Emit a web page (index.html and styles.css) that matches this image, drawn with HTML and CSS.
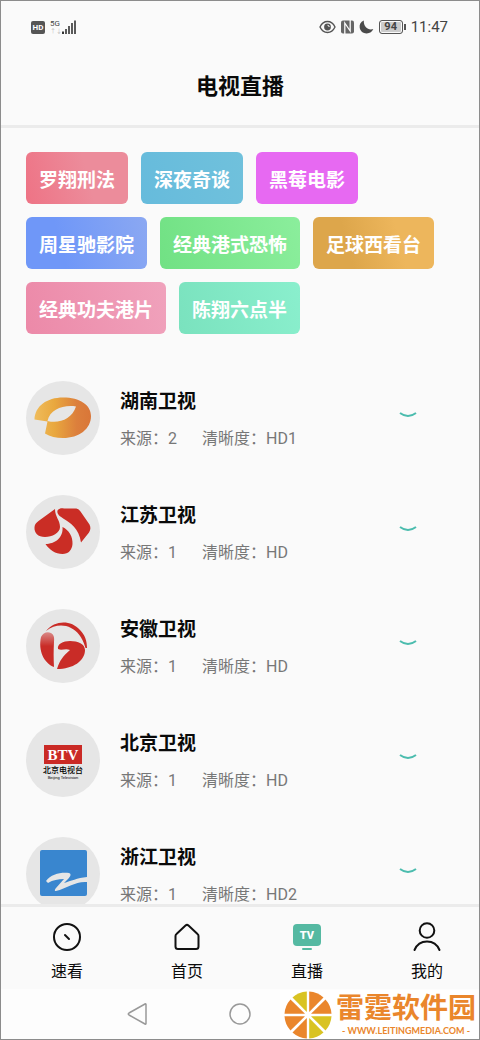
FILE: index.html
```html
<!DOCTYPE html>
<html lang="zh-CN">
<head>
    <meta charset="UTF-8">
    <meta name="viewport" content="width=device-width, initial-scale=1.0">
    <title>电视直播</title>
    <link rel="stylesheet" href="styles.css">
</head>
<body>
    <header class="header">
        <div class="status">
            <span class="hd">HD</span>
            <span class="network">5G<small>↑↓</small></span>
            <svg class="signal" width="16" height="14" viewBox="0 0 16 14" fill="#333">
                <path d="M1 11.500h2V14H1zM4.200 9h1.600v5H4.200zM7.200 6h1.600v8H7.200zM10.200 3h1.600v11h-1.600zM13.200 .5h1.600V14h-1.600z"/>
            </svg>
            <span class="spacer"></span>
            <svg width="17" height="14" viewBox="0 0 17 14" fill="none" stroke="#555" stroke-width="1.400">
                <path d="M1 7C4.500 -.3 12.500-.3 16 7 12.500 14.300 4.500 14.300 1 7z"/>
                <circle cx="8.500" cy="7" r="3.400" fill="#555" stroke="none"/>
                <path d="M8.500 5.300a1.700 1.700 0 0 1 1.700 1.700" stroke="#fff" stroke-width="1"/>
            </svg>
            <svg width="13" height="14" viewBox="0 0 13 14">
                <rect width="13" height="13" y=".5" rx="2" fill="#666"/>
                <path d="M3.800 14V3l5.400 8V0" fill="none" stroke="#fafafa" stroke-width="1.300"/>
            </svg>
            <svg width="15" height="14" viewBox="0 0 15 14" fill="#4a4a4a">
                <path d="M4.800.5C1.500 1.800.2 4.600.7 7.800c.6 3.500 3.500 5.800 7 5.700 3.200-.1 5.500-1.900 6.600-4.500-4.800 1.800-9.900-2-9.500-8.500z"/>
            </svg>
            <span class="battery">94</span>
            <time class="clock">11:47</time>
        </div>
        <h1>电视直播</h1>
    </header>

    <main>
        <div class="tags">
            <button class="tag red">罗翔刑法</button>
            <button class="tag blue">深夜奇谈</button>
            <button class="tag purple">黑莓电影</button>
            <button class="tag indigo">周星驰影院</button>
            <button class="tag green">经典港式恐怖</button>
            <button class="tag orange">足球西看台</button>
            <button class="tag pink">经典功夫港片</button>
            <button class="tag mint">陈翔六点半</button>
        </div>

        <ul class="channels">
            <li>
                <svg class="logo" viewBox="0 0 74 74">
                    <defs>
                        <linearGradient id="mango">
                            <stop offset="0" stop-color="#efbc5c"/>
                            <stop offset=".35" stop-color="#e9a83e"/>
                            <stop offset=".75" stop-color="#dc7f3c"/>
                            <stop offset="1" stop-color="#d97638"/>
                        </linearGradient>
                    </defs>
                    <path fill="url(#mango)" fill-rule="evenodd" d="M8.500 38.500C9 25 21 16.500 37 16.500c17 0 28 7.500 28 18.500 0 13-12 22-28 22-7 0-13-1.500-18-4.500L21.500 40.500zM21.500 40C33 43 46 38 50 25.500 38 23.500 24 28 21.500 40z"/>
                </svg>
                <div class="info">
                    <h2>湖南卫视</h2>
                    <p><span>来源：2</span><span>清晰度：HD1</span></p>
                </div>
                <button class="more" aria-label="展开湖南卫视"><svg width="18" height="6" viewBox="0 0 18 6"><path d="M1 1q8 6 16 0"/></svg></button>
            </li>
            <li>
                <svg class="logo" viewBox="0 0 74 74" fill="#ca2d25">
                    <path d="M29 14C29 22 34 25 34 32c0 6-8 10-15 10C12 42 8 38 8.500 32c.3-3 2-4.500 4-6z"/>
                    <path d="M31.500 15.500C33 13.500 35 13 38 13.500h11c3 0 4 1 5.500 3l9 13c1.500 3 1 5.500-.5 8l-8 10C53 33 44 28 38 24c-4-2.500-7.500-5-6.500-8.500z"/>
                    <path d="M36.500 32C43 35 47 42 46.500 49c-.5 6-4 10-10 10-7 0-13-4-17-10 9 0 18-6 17-17z"/>
                </svg>
                <div class="info">
                    <h2>江苏卫视</h2>
                    <p><span>来源：1</span><span>清晰度：HD</span></p>
                </div>
                <button class="more" aria-label="展开江苏卫视"><svg width="18" height="6" viewBox="0 0 18 6"><path d="M1 1q8 6 16 0"/></svg></button>
            </li>
            <li>
                <svg class="logo" viewBox="0 0 74 74" fill="#c92c27">
                    <defs>
                        <linearGradient id="gloss" x2="0" y2="1">
                            <stop offset="0" stop-color="#d98a88"/>
                            <stop offset=".4" stop-color="#c92c27"/>
                        </linearGradient>
                    </defs>
                    <path d="M20 22C29 11 45 11 54 21c5 5 7 11 7 18h-1.500C56 27 51 22 45 19c-8-4-17-3-25 3z"/>
                    <path fill="url(#gloss)" d="M15 28c2-4 6-6 10-4 3 1.500 3.500 5 3 9-.5 9-.5 16 0 25C18 54 12 42 15 28z"/>
                    <path d="M32 40c-1-5 5-8 12-8 8 0 15 3 15 9C59 52 47 60 31 60c3-9 6-13 13-19-5-2-8 1-12-1z"/>
                </svg>
                <div class="info">
                    <h2>安徽卫视</h2>
                    <p><span>来源：1</span><span>清晰度：HD</span></p>
                </div>
                <button class="more" aria-label="展开安徽卫视"><svg width="18" height="6" viewBox="0 0 18 6"><path d="M1 1q8 6 16 0"/></svg></button>
            </li>
            <li>
                <svg class="logo" viewBox="0 0 74 74" text-anchor="middle">
                    <rect x="18" y="22" width="38" height="19" fill="#ca2a25"/>
                    <text class="btv" x="37" y="37">BTV</text>
                    <text class="btv-cn" x="37" y="50">北京电视台</text>
                    <text class="btv-en" x="37" y="56">Beijing Television</text>
                </svg>
                <div class="info">
                    <h2>北京卫视</h2>
                    <p><span>来源：1</span><span>清晰度：HD</span></p>
                </div>
                <button class="more" aria-label="展开北京卫视"><svg width="18" height="6" viewBox="0 0 18 6"><path d="M1 1q8 6 16 0"/></svg></button>
            </li>
            <li>
                <svg class="logo" viewBox="0 0 74 74">
                    <rect x="14" y="13" width="47" height="46" rx="2" fill="#3986cf"/>
                    <path fill="#e6e6e6" d="M20 44c5-7 15-9 23-8 3 1 1 4-1 6l-4 4c7-2 13-5 23-6v5c-11-1-20 6-31 9-2 0-1-2 0-3l8-9c-6 0-11 1-16 4z"/>
                </svg>
                <div class="info">
                    <h2>浙江卫视</h2>
                    <p><span>来源：1</span><span>清晰度：HD2</span></p>
                </div>
                <button class="more" aria-label="展开浙江卫视"><svg width="18" height="6" viewBox="0 0 18 6"><path d="M1 1q8 6 16 0"/></svg></button>
            </li>
        </ul>
    </main>

    <nav class="tabbar">
        <a href="#quick">
            <svg width="30" height="30" viewBox="0 0 30 30"><circle cx="15" cy="15" r="13"/><path d="M13 13l4 4"/></svg>
            速看
        </a>
        <a href="#home">
            <svg width="30" height="30" viewBox="0 0 30 30"><path d="M4.500 12q-1 .8-1 2v10.500q0 2.500 2.500 2.500h18q2.500 0 2.500-2.500V14q0-1.200-1-2L16.500 3.500q-1.500-1.200-3 0z"/></svg>
            首页
        </a>
        <a href="#live" aria-current="page">
            <svg width="30" height="30" viewBox="0 0 30 30">
                <rect class="tv" x="1" y="2" width="28" height="22" rx="4"/>
                <rect class="tv" x="10" y="26" width="10" height="2" rx="1"/>
                <text class="tv-text" x="15" y="17" text-anchor="middle">TV</text>
            </svg>
            直播
        </a>
        <a href="#mine">
            <svg width="30" height="30" viewBox="0 0 30 30"><circle cx="15" cy="8.500" r="7.300"/><path d="M2.500 28C5 22 10 19.500 15 19.500s10 2.500 12.500 8.500"/></svg>
            我的
        </a>
    </nav>

    <div class="sysnav">
        <button aria-label="返回"><svg width="24" height="24" viewBox="0 0 24 24"><path d="M20 2.500v19q0 1-1 .5L3 13q-1.500-1 0-2L19 2q1-.5 1 .5z"/></svg></button>
        <button aria-label="主屏幕"><svg width="24" height="24" viewBox="0 0 24 24"><circle cx="12" cy="12" r="10"/></svg></button>
        <button aria-label="最近任务"><svg width="24" height="24" viewBox="0 0 24 24"><rect x="3" y="3" width="18" height="18" rx="1"/></svg></button>
    </div>

    <div class="watermark">
        <svg width="48" height="48" viewBox="-24 -24 48 48" fill="#ea862c">
            <path fill="#d9c322" d="M-1.200-3V-23.500A23.500 23.500 0 0 0-15.500-17.500z"/>
            <path d="M1.200-3V-23.500A23.500 23.500 0 0 1 15.500-17.500z"/>
            <path d="M3-1.200L17.500-15.500A23.500 23.500 0 0 1 23.500-1.200z"/>
            <path fill="#d9c322" d="M3 1.200H23.500A23.500 23.500 0 0 1 17.500 15.500z"/>
            <path fill="#d9c322" d="M1.200 3L15.500 17.500A23.500 23.500 0 0 1 1.200 23.500z"/>
            <path d="M-1.200 3V23.500A23.500 23.500 0 0 1-15.500 17.500z"/>
            <path d="M-3 1.200L-17.500 15.500A23.500 23.500 0 0 1-23.500 1.200z"/>
            <path d="M-3-1.200H-23.500A23.500 23.500 0 0 1-17.500-15.500z"/>
        </svg>
        <div>
            <strong>雷霆软件园</strong>
            <small>- WWW.LEITINGMEDIA.COM -</small>
        </div>
    </div>
</body>
</html>
```

FILE: styles.css
```css
* {
    box-sizing: border-box;
}

body {
    position: relative;
    display: flex;
    flex-direction: column;
    height: 100vh;
    margin: 0;
    border: 1px solid #8c8c8c;
    background-color: #fafafa;
    color: #0a0a0a;
    font-family: Roboto, "Noto Sans CJK SC", sans-serif;
}

h1, h2, p, ul {
    margin: 0;
    padding: 0;
}

button {
    border: none;
    padding: 0;
    background: none;
    font-family: inherit;
    cursor: pointer;
}

svg {
    display: block;
    flex: none;
}

/* header */
.header {
    flex: none;
    border-bottom: 3px solid #ebebeb;
}

.status {
    display: flex;
    align-items: center;
    height: 52px;
    padding: 0 31px 0 30px;
    gap: 5px;
    color: #444;
}

.hd {
    width: 14px;
    border-radius: 2px;
    background-color: #555;
    color: #fff;
    font-size: 8px;
    font-weight: bold;
    line-height: 13px;
    text-align: center;
}

.network {
    font-size: 8px;
    line-height: 8px;
}

.network small {
    display: block;
    color: #bbb;
    font-size: 6px;
    line-height: 6px;
}

.signal {
    margin-left: -6px;
}

.spacer {
    flex: 1;
}

.battery {
    position: relative;
    width: 24px;
    margin-right: 3px;
    border: 1px solid #555;
    border-radius: 3px;
    background-color: #ccc;
    box-shadow: inset 0 0 0 1px #fafafa;
    font-size: 11px;
    font-weight: bold;
    line-height: 12px;
    text-align: center;
}

.battery::after {
    content: "";
    position: absolute;
    top: 3px;
    right: -4px;
    width: 2px;
    height: 6px;
    background-color: #555;
}

.clock {
    font-size: 15px;
}

h1 {
    height: 72px;
    padding-top: 18px;
    font-size: 22px;
    line-height: 32px;
    text-align: center;
}

/* content */
main {
    flex: 1;
    min-height: 0;
    padding: 24px 25px 0;
    overflow-y: auto;
    scrollbar-width: none;
}

.tags {
    display: flex;
    flex-wrap: wrap;
    gap: 13px;
}

.tag {
    height: 52px;
    padding: 0 13px;
    border-radius: 6px;
    color: #fff;
    font-size: 19px;
    font-weight: bold;
}

.red { background: linear-gradient(75deg, #ee7385, #ec8c9b 60%); }
.blue { background: linear-gradient(75deg, #66bbdc, #70c1dc); }
.purple { background: #e769f2; }
.indigo { background: linear-gradient(75deg, #6f97f8 30%, #8ba8f2); }
.green { background: linear-gradient(75deg, #71e184, #8bee9c); }
.orange { background: linear-gradient(75deg, #dda64b 30%, #edb65c 70%); }
.pink { background: linear-gradient(75deg, #ec89a8, #f0a2bc); }
.mint { background: linear-gradient(75deg, #7ae2be, #8aefcd); }

.channels {
    display: flex;
    flex-direction: column;
    gap: 40px;
    margin-top: 47px;
    padding-right: 37px;
    list-style: none;
}

.channels li {
    display: flex;
    align-items: center;
    gap: 20px;
}

.logo {
    width: 74px;
    height: 74px;
    border-radius: 50%;
    background-color: #e6e6e6;
}

.btv {
    fill: #fff;
    font: bold 15px "Liberation Serif", serif;
}

.btv-cn {
    font: 500 8px "Noto Sans CJK SC", sans-serif;
}

.btv-en {
    font: 4px "Liberation Sans", sans-serif;
}

.info {
    flex: 1;
    padding-top: 2px;
}

h2 {
    font-size: 19px;
    line-height: 28px;
}

.info p {
    display: flex;
    gap: 25px;
    margin-top: 11px;
    color: #777;
    font-size: 16px;
    line-height: 24px;
}

.more {
    padding-bottom: 6px;
}

.more path {
    fill: none;
    stroke: #4bbcae;
    stroke-width: 2;
}

/* bottom tabs */
.tabbar {
    display: flex;
    flex: none;
    justify-content: space-between;
    padding: 15px 36px 5px 50px;
    border-top: 3px solid #ebebeb;
}

.tabbar a {
    display: flex;
    flex-direction: column;
    align-items: center;
    gap: 8px;
    color: #0a0a0a;
    font-size: 16px;
    line-height: 24px;
    text-decoration: none;
}

.tabbar svg {
    fill: none;
    stroke: #111;
    stroke-width: 2;
    stroke-linecap: round;
}

.tabbar .tv {
    fill: #55b9a2;
    stroke: none;
}

.tabbar .tv-text {
    fill: #fff;
    stroke: none;
    font-size: 11px;
    font-weight: 900;
}

.sysnav {
    display: flex;
    flex: none;
    align-items: center;
    justify-content: center;
    gap: 78px;
    height: 50px;
    background-color: #fdfdfd;
}

.sysnav svg {
    fill: none;
    stroke: #999;
    stroke-width: 1.5;
}

/* site badge over the corner */
.watermark {
    position: absolute;
    right: -1px;
    bottom: -1px;
    display: flex;
    align-items: center;
    gap: 4px;
    width: 200px;
    height: 50px;
    padding-left: 4px;
    background-color: #fff;
    color: #ea862c;
    text-align: center;
    white-space: nowrap;
}

.watermark strong {
    display: block;
    font-size: 28px;
    line-height: 32px;
}

.watermark small {
    display: block;
    font-family: Lato, sans-serif;
    font-size: 9px;
    font-weight: bold;
    line-height: 12px;
}
```
